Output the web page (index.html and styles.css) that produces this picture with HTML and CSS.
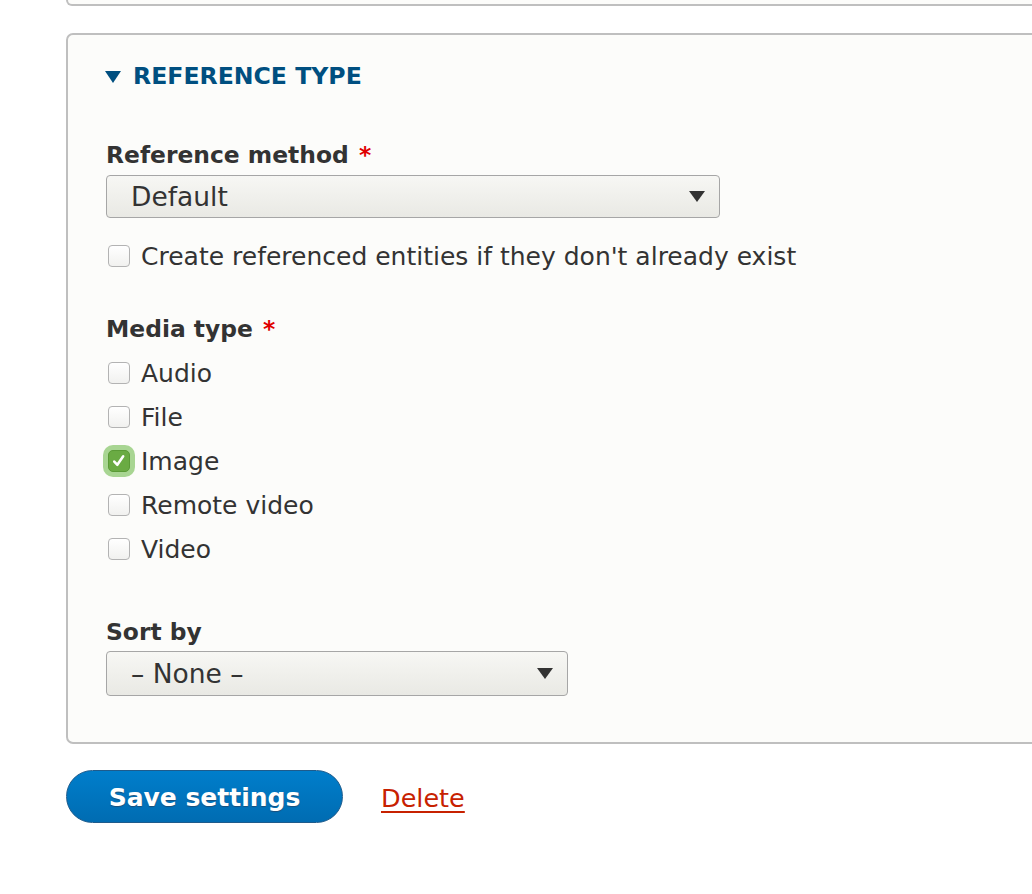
FILE: index.html
```html
<!DOCTYPE html>
<html lang="en">
<head>
<meta charset="utf-8">
<title>Reference type</title>
<link rel="stylesheet" href="styles.css">
</head>
<body>
<div class="page">
  <div class="prev-fieldset"></div>
  <div class="fieldset">
    <div class="summary">
      <span class="summary-arrow"></span>
      <span class="summary-text">Reference type</span>
    </div>

    <div class="label label-first">Reference method <span class="req">*</span></div>
    <div class="select select-wide">
      <span class="select-text">Default</span>
      <span class="select-arrow"></span>
    </div>

    <div class="check-row check-create">
      <span class="box"></span><span class="check-label">Create referenced entities if they don't already exist</span>
    </div>

    <div class="label label-media">Media type <span class="req">*</span></div>
    <div class="check-list">
      <div class="check-row"><span class="box"></span><span class="check-label">Audio</span></div>
      <div class="check-row"><span class="box"></span><span class="check-label">File</span></div>
      <div class="check-row"><span class="box box-checked"><svg viewBox="0 0 22 22" width="22" height="22"><path d="M5.8 11.6 L9.2 15.2 L15.6 5.8" fill="none" stroke="#fff" stroke-width="2.8" stroke-linecap="round" stroke-linejoin="round"/></svg></span><span class="check-label">Image</span></div>
      <div class="check-row"><span class="box"></span><span class="check-label">Remote video</span></div>
      <div class="check-row"><span class="box"></span><span class="check-label">Video</span></div>
    </div>

    <div class="label label-sort">Sort by</div>
    <div class="select select-narrow">
      <span class="select-text">– None –</span>
      <span class="select-arrow"></span>
    </div>
  </div>

  <div class="actions">
    <span class="button-primary">Save settings</span>
    <a class="link-danger" href="#">Delete</a>
  </div>
</div>
</body>
</html>
```

FILE: styles.css
```css
html, body {
  margin: 0;
  padding: 0;
  background: #ffffff;
  overflow: hidden;
}

body {
  font-family: "DejaVu Sans", Verdana, sans-serif;
  font-size: 25px;
  color: #333333;
}

.page {
  padding-left: 66px;
}

.prev-fieldset {
  height: 4px;
  margin-right: -40px;
  border: 2px solid #bfbfbf;
  border-top: none;
  border-radius: 0 0 7px 7px;
  background: #fcfcfa;
}

.fieldset {
  margin-top: 27px;
  margin-right: -40px;
  border: 2px solid #bfbfbf;
  border-radius: 7px;
  background: #fcfcfa;
  padding: 19px 0 46px 38px;
  display: flex;
  flex-direction: column;
  align-items: flex-start;
}

.summary {
  height: 44px;
  display: flex;
  align-items: center;
  color: #004f80;
}

.summary-arrow {
  width: 0;
  height: 0;
  border-left: 8px solid transparent;
  border-right: 8px solid transparent;
  border-top: 12px solid #004f80;
  margin-left: -1px;
  margin-right: 12px;
  margin-top: 2px;
}

.summary-text {
  font-weight: bold;
  text-transform: uppercase;
  font-size: 23.6px;
}

.label {
  height: 30px;
  line-height: 30px;
  font-weight: bold;
  font-size: 23.4px;
  color: #333333;
}

.label-first { margin-top: 42px; }
.label-media { margin-top: 36px; }
.label-sort { margin-top: 46px; }

.req {
  color: #e00000;
  margin-left: 2px;
}

.select {
  box-sizing: border-box;
  display: flex;
  align-items: center;
  justify-content: space-between;
  border: 1px solid #a6a6a6;
  border-radius: 4px;
  background: linear-gradient(#f7f7f4, #e9e9e4);
  padding: 0 14px 0 24px;
  color: #333333;
  font-size: 26.5px;
}

.select-wide {
  width: 614px;
  height: 43px;
  margin-top: 5px;
}

.select-narrow {
  width: 462px;
  height: 45px;
  margin-top: 4px;
}

.select-arrow {
  width: 0;
  height: 0;
  border-left: 8px solid transparent;
  border-right: 8px solid transparent;
  border-top: 11px solid #333333;
}

.check-row {
  height: 44px;
  display: flex;
  align-items: center;
}

.check-create { margin-top: 16px; }
.check-list { margin-top: 7px; }

.box {
  box-sizing: border-box;
  width: 22px;
  height: 22px;
  margin-left: 2px;
  margin-right: 11px;
  border: 1px solid #b3b3b3;
  border-radius: 4px;
  background: linear-gradient(#ffffff, #f1f1ef);
  display: flex;
  align-items: center;
  justify-content: center;
}

.box-checked {
  border-color: #5a9a36;
  background: #6aab43;
  box-shadow: 0 0 0 5px #a8d592;
  border-radius: 5px;
}

.box-checked svg {
  display: block;
}

.actions {
  margin-top: 26px;
  display: flex;
  align-items: center;
}

.button-primary {
  box-sizing: border-box;
  width: 277px;
  height: 53px;
  border: 1px solid #1e5b8c;
  border-radius: 27px;
  background: linear-gradient(#007ecb, #006cb2);
  color: #ffffff;
  font-weight: bold;
  display: flex;
  align-items: center;
  justify-content: center;
  padding-top: 2px;
  text-shadow: 0 1px 1px #1b4f7a;
}

.link-danger {
  margin-left: 38px;
  margin-top: 2px;
  color: #c72100;
  font-size: 25.5px;
  text-decoration: underline;
  text-underline-offset: 4px;
  text-decoration-thickness: 2px;
}
```
